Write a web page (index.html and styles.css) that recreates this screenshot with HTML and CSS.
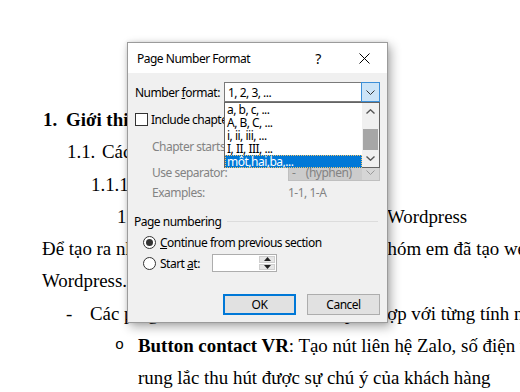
FILE: index.html
```html
<!DOCTYPE html>
<html lang="vi">
<head>
<meta charset="utf-8">
<title>Page Number Format</title>
<link rel="stylesheet" href="styles.css">
</head>
<body>
<div class="page">
  <p class="line l1"><span class="mk n1">1.</span>Giới thiệu chung</p>
  <p class="line l2"><span class="mk n2">1.1.</span>Các công nghệ sử dụng</p>
  <p class="line l3">1.1.1. Tổng quan về Wordpress</p>
  <p class="line l4">1.1.1.1. Giới thiệu về plugins trong Wordpress</p>
  <p class="line pp">Để tạo ra những plugin hỗ trợ cho websites, nhóm em đã tạo website trên</p>
  <p class="line pp">Wordpress.</p>
  <p class="line dash"><span class="mk">-</span>Các plugin được thiết kế đặc biệt phù hợp với từng tính năng</p>
  <p class="line bul"><span class="mk bullet">o</span><b>Button contact VR</b>: Tạo nút liên hệ Zalo, số điện thoại</p>
  <p class="line cont">rung lắc thu hút được sự chú ý của khách hàng</p>
</div>

<div class="dialog">
  <div class="titlebar">
    <span class="title">Page Number Format</span>
    <span class="help">?</span>
    <span class="close"><svg width="11" height="11" viewBox="0 0 11 11"><path d="M0.5 0.5L10.5 10.5M10.5 0.5L0.5 10.5" stroke="#000" stroke-width="1" fill="none"/></svg></span>
  </div>
  <div class="body">
    <div class="row r-format">
      <span class="lbl">Number <u>f</u>ormat:</span>
      <div class="combo">
        <span class="combo-text">1, 2, 3, ...</span>
        <span class="combo-btn"><svg width="9" height="5" viewBox="0 0 9 5"><path d="M0.5 0.5L4.5 4.5L8.5 0.5" stroke="#333" fill="none"/></svg></span>
      </div>
    </div>
    <div class="row r-check">
      <span class="checkbox"></span>
      <span class="check-text">Include chapter <u>n</u>umber</span>
    </div>
    <div class="row r-chapter disabled">
      <span class="ilbl">Chapter starts with style:</span>
      <div class="combo off small"><span class="combo-text">Heading 1</span></div>
    </div>
    <div class="row r-sep disabled">
      <span class="ilbl">Use separator:</span>
      <div class="combo off small">
        <span class="combo-text">-&nbsp;&nbsp;&nbsp;&nbsp;(hyphen)</span>
        <span class="off-btn"><svg width="9" height="5" viewBox="0 0 9 5"><path d="M0.5 0.5L4.5 4.5L8.5 0.5" stroke="#9a9a9a" fill="none"/></svg></span>
      </div>
    </div>
    <div class="row r-ex disabled">
      <span class="ilbl">Examples:</span>
      <span>1-1, 1-A</span>
    </div>
    <div class="row r-group">
      <span>Page numbering</span>
      <span class="group-line"></span>
    </div>
    <div class="row r-radio1">
      <span class="radio on"></span>
      <span class="radio-text"><u>C</u>ontinue from previous section</span>
    </div>
    <div class="row r-radio2">
      <span class="radio"></span>
      <span class="radio-text start">Start <u>a</u>t:</span>
      <div class="spin">
        <span class="spin-field"></span>
        <span class="spin-btns">
          <span class="spin-b"><svg width="7" height="4" viewBox="0 0 7 4"><path d="M0 4L3.5 0L7 4Z" fill="#222"/></svg></span>
          <span class="spin-b"><svg width="7" height="4" viewBox="0 0 7 4"><path d="M0 0L3.5 4L7 0Z" fill="#222"/></svg></span>
        </span>
      </div>
    </div>
    <div class="row r-buttons">
      <span class="btn default">OK</span>
      <span class="btn">Cancel</span>
    </div>
  </div>

  <div class="droplist">
    <div class="items">
      <div class="item">a, b, c, ...</div>
      <div class="item">A, B, C, ...</div>
      <div class="item">i, ii, iii, ...</div>
      <div class="item">I, II, III, ...</div>
      <div class="item sel">một,hai,ba,...</div>
    </div>
    <div class="scrollbar">
      <span class="sb-arrow"><svg width="9" height="5" viewBox="0 0 9 5"><path d="M0.5 4.5L4.5 0.8L8.5 4.5" stroke="#555" stroke-width="1.4" fill="none"/></svg></span>
      <span class="sb-thumb"></span>
      <span class="sb-arrow down"><svg width="9" height="5" viewBox="0 0 9 5"><path d="M0.5 0.5L4.5 4.2L8.5 0.5" stroke="#555" stroke-width="1.4" fill="none"/></svg></span>
    </div>
  </div>
</div>
</body>
</html>
```

FILE: styles.css
```css
html, body {
  margin: 0;
  padding: 0;
}
body {
  width: 520px;
  height: 392px;
  overflow: hidden;
  position: relative;
  background: #ffffff;
}

/* ---------- document behind ---------- */
.page {
  padding-top: 104px;
  font-family: "Liberation Serif", "Times New Roman", serif;
  font-size: 18.9px;
  line-height: 32.25px;
  color: #000;
  white-space: nowrap;
  overflow: hidden;
}
.line {
  margin: 0;
  height: 32.25px;
  display: flex;
}
.mk { flex-shrink: 0; }
.l1 { padding-left: 43px; font-weight: bold; }
.n1 { width: 23px; }
.l2 { padding-left: 67px; }
.n2 { width: 35px; }
.l3 { padding-left: 91px; }
.l4 { padding-left: 117px; }
.pp { padding-left: 42px; }
.dash { padding-left: 66px; }
.dash .mk { width: 24px; }
.bul { padding-left: 115px; white-space: pre; }
.bul .mk { width: 23px; }
.bullet {
  font-family: "Liberation Mono", monospace;
  font-size: 15px;
}
.cont { padding-left: 138px; }

/* ---------- dialog ---------- */
.dialog {
  position: absolute;
  left: 127px;
  top: 42px;
  width: 259px;
  height: 279px;
  border: 1px solid #9b9b9b;
  background: #f0f0f0;
  box-shadow: 3px 4px 10px rgba(0, 0, 0, 0.32), 0 0 4px rgba(0, 0, 0, 0.12);
  font-family: "Noto Sans", "Open Sans", sans-serif;
  font-size: 12px;
  letter-spacing: -0.5px;
  color: #000;
  white-space: nowrap;
}
.titlebar {
  height: 30px;
  background: #ffffff;
  display: flex;
  align-items: center;
}
.title {
  flex: 1;
  padding-left: 9px;
}
.help {
  width: 36px;
  margin-right: 5px;
  text-align: center;
  font-size: 14px;
}
.close {
  width: 46px;
  height: 30px;
  display: flex;
  align-items: center;
  justify-content: center;
}

.body {
  padding: 9px 7px 0 6px;
}
.row {
  display: flex;
  align-items: center;
}
.r-format { height: 20px; }
.lbl {
  width: 89px;
  padding-left: 1px;
}
.combo {
  width: 156px;
  height: 20px;
  box-sizing: border-box;
  border: 1px solid #7a7a7a;
  background: #fff;
  display: flex;
  align-items: center;
}
.combo-text { padding-left: 3px; flex: 1; }
.combo-btn {
  align-self: stretch;
  width: 17px;
  margin: -1px -1px -1px 0;
  border: 1px solid #3c8fd8;
  background: #cce4f7;
  display: flex;
  align-items: center;
  justify-content: center;
}

.r-check { height: 13px; margin-top: 11px; }
.checkbox {
  width: 13px;
  height: 13px;
  box-sizing: border-box;
  border: 1px solid #333;
  background: #fff;
  margin-left: 1px;
}
.check-text { margin-left: 3px; }

.disabled { color: #838383; }
.ilbl {
  width: 136px;
  padding-left: 18px;
}
.r-chapter { height: 16px; margin-top: 12px; }
.r-sep { height: 17px; margin-top: 10px; }
.r-ex { height: 16px; margin-top: 3px; }
.combo.off {
  width: 92px;
  border-color: #bfbfbf;
  background: #cccccc;
  color: #838383;
}
.combo.small { height: 17px; }
.off-btn {
  width: 17px;
  align-self: stretch;
  display: flex;
  align-items: center;
  justify-content: center;
  background: #d6d6d6;
}

.r-group { height: 16px; margin-top: 13px; }
.group-line {
  flex: 1;
  height: 1px;
  background: #dcdcdc;
  margin: 0 2px 0 6px;
}

.radio {
  width: 13px;
  height: 13px;
  box-sizing: border-box;
  border: 1px solid #333;
  border-radius: 50%;
  background: #fff;
  margin-left: 9px;
  display: flex;
  align-items: center;
  justify-content: center;
}
.radio.on::after {
  content: "";
  width: 7px;
  height: 7px;
  border-radius: 50%;
  background: #333;
}
.radio-text { margin-left: 4px; }
.r-radio1 { height: 16px; margin-top: 5px; }
.r-radio2 { height: 18px; margin-top: 4px; }
.start { width: 52px; }
.spin {
  width: 65px;
  height: 18px;
  box-sizing: border-box;
  border: 1px solid #adadad;
  background: #fff;
  display: flex;
}
.spin-field { flex: 1; }
.spin-btns {
  width: 16px;
  display: flex;
  flex-direction: column;
  padding: 1px 1px 1px 0;
  gap: 1px;
}
.spin-b {
  flex: 1;
  background: #e6e6e6;
  border: 1px solid #cfcfcf;
  display: flex;
  align-items: center;
  justify-content: center;
}

.r-buttons {
  height: 21px;
  margin-top: 22px;
  justify-content: flex-end;
  gap: 11px;
}
.btn {
  width: 73px;
  height: 21px;
  box-sizing: border-box;
  border: 1px solid #adadad;
  background: #e1e1e1;
  display: flex;
  align-items: center;
  justify-content: center;
}
.btn.default { border: 2px solid #0078d7; }

/* ---------- open drop-down list ---------- */
.droplist {
  position: absolute;
  left: 96px;
  top: 59px;
  width: 156px;
  height: 66px;
  box-sizing: border-box;
  border: 1px solid #646464;
  background: #fff;
  display: flex;
}
.items { flex: 1; }
.item {
  height: 13px;
  line-height: 13px;
  padding-left: 2px;
}
.item.sel {
  background: #0078d7;
  color: #fff;
  outline: 1px dotted #f2c36b;
  outline-offset: -1px;
}
.scrollbar {
  width: 17px;
  background: #f0f0f0;
  display: flex;
  flex-direction: column;
  align-items: center;
}
.sb-arrow {
  height: 17px;
  width: 17px;
  display: flex;
  align-items: center;
  justify-content: center;
}
.sb-thumb {
  width: 15px;
  height: 21px;
  margin-top: 9px;
  background: #a6a6a6;
}
.sb-arrow.down { margin-top: auto; }
```
